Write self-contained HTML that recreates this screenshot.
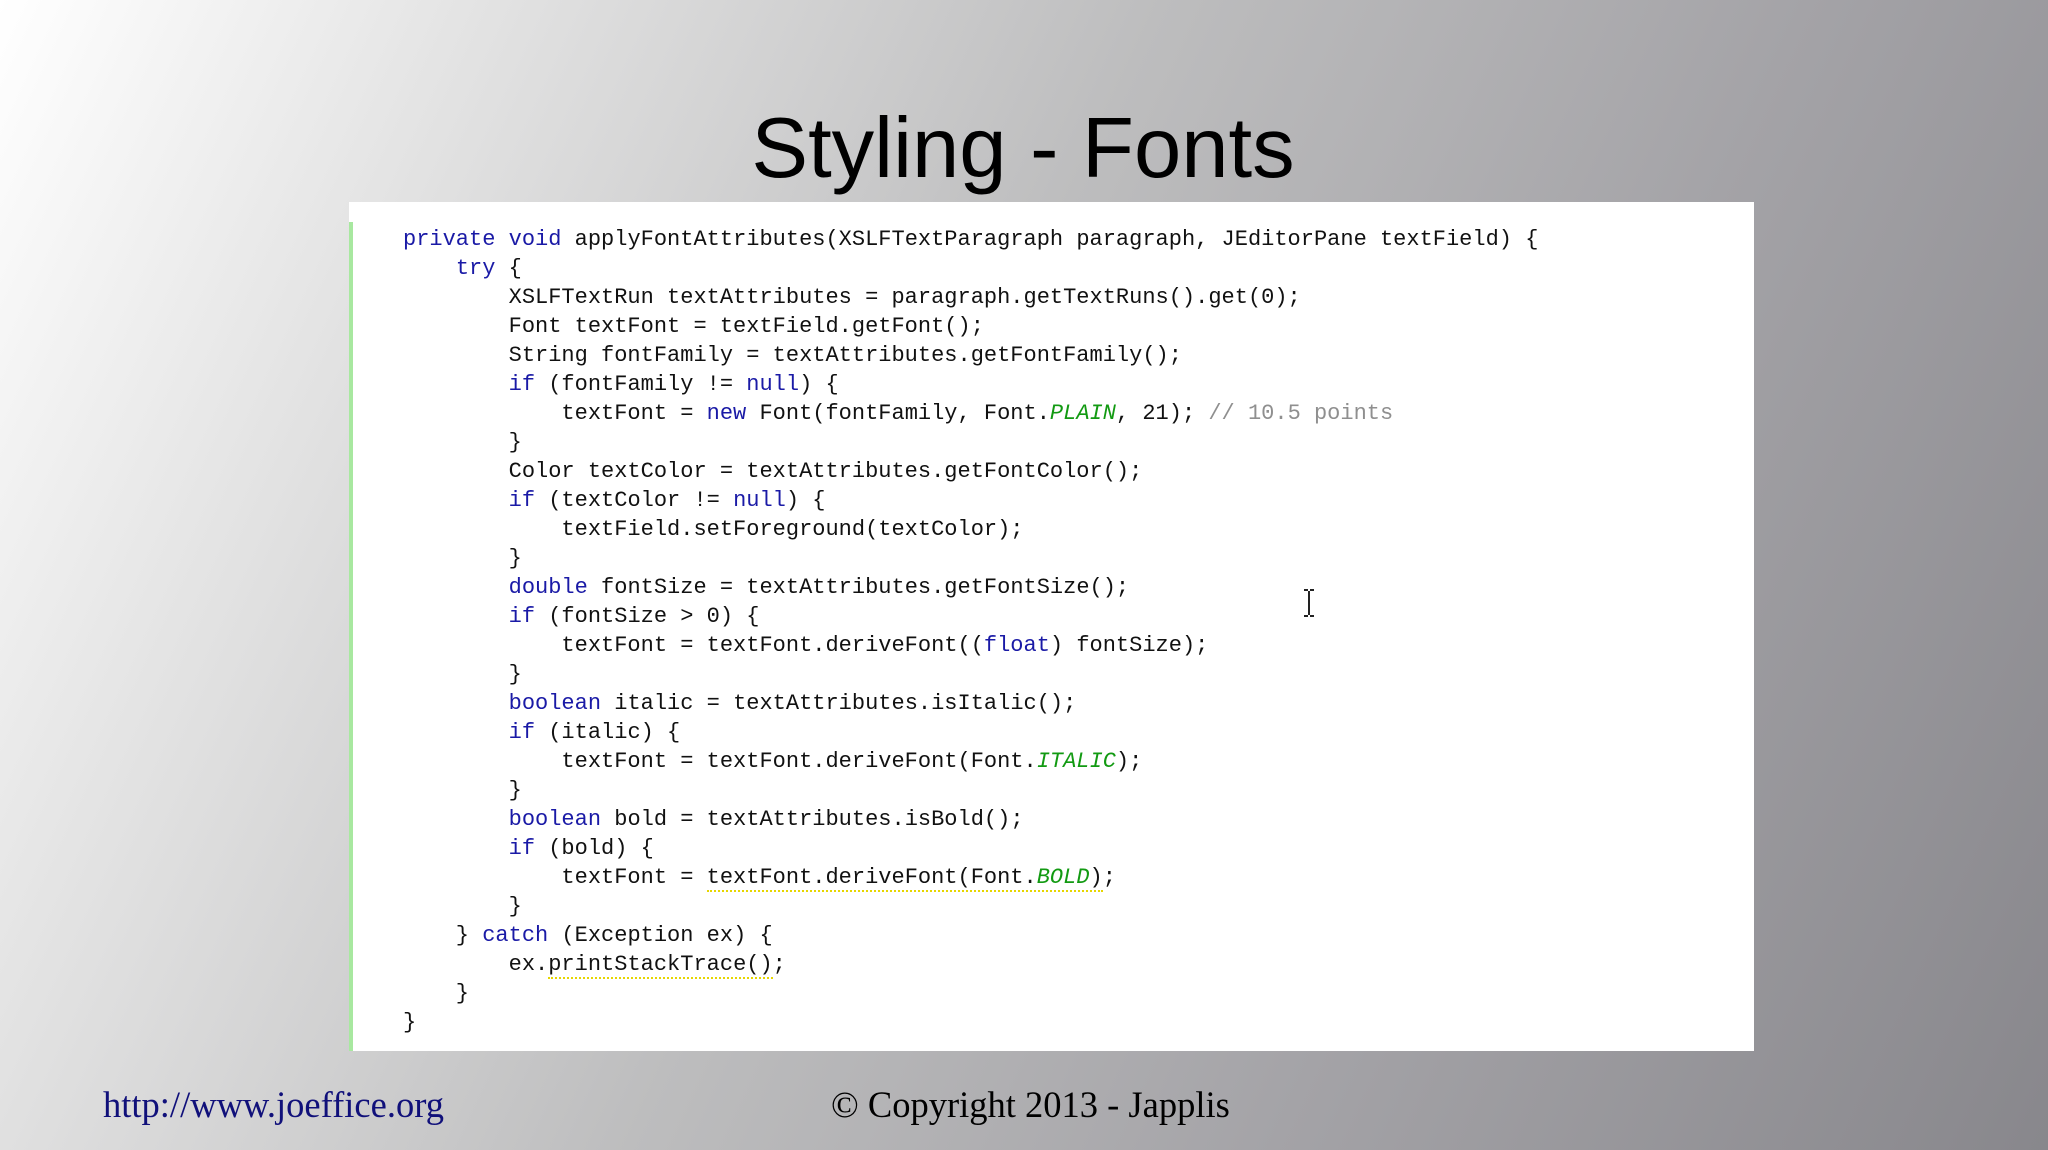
<!DOCTYPE html>
<html><head><meta charset="utf-8"><style>
html,body{margin:0;padding:0}
body{width:2048px;height:1150px;overflow:hidden;position:relative;
background:linear-gradient(115deg,#ffffff 0%,#e4e4e4 18%,#bdbdbe 45%,#a4a3a7 70%,#88878c 100%);}
.title{position:absolute;left:0;width:2046px;top:100px;text-align:center;font:85px "Liberation Sans",sans-serif;color:#000;}
.box{position:absolute;left:349px;top:202px;width:1405px;height:849px;background:#fff;}
.bar{position:absolute;left:349px;top:222px;width:4px;height:829px;background:#a8e8a0;}
pre{position:absolute;left:403px;top:225px;margin:0;font:22px/29px "Liberation Mono",monospace;color:#111;}
.k{color:#1a1aa6}.c{color:#8f8f8f}.g{color:#129a12;font-style:italic}
.u{border-bottom:2px dotted #e6d600}
.f1{position:absolute;left:103px;top:1083px;font:36.5px "Liberation Serif",serif;color:#10107a;}
.f2{position:absolute;left:831px;top:1083px;font:36.5px "Liberation Serif",serif;color:#000;}
</style></head><body>
<div class="title">Styling - Fonts</div>
<div class="box"></div><div class="bar"></div>
<svg style="position:absolute;left:1302px;top:588px" width="14" height="30" viewBox="0 0 14 30"><path d="M2 2h4M8 2h4M7 3v24M2 28h4M8 28h4" stroke="#222" stroke-width="2" fill="none"/></svg>
<pre><span class="k">private</span> <span class="k">void</span> applyFontAttributes(XSLFTextParagraph paragraph, JEditorPane textField) {
    <span class="k">try</span> {
        XSLFTextRun textAttributes = paragraph.getTextRuns().get(0);
        Font textFont = textField.getFont();
        String fontFamily = textAttributes.getFontFamily();
        <span class="k">if</span> (fontFamily != <span class="k">null</span>) {
            textFont = <span class="k">new</span> Font(fontFamily, Font.<span class="g">PLAIN</span>, 21); <span class="c">// 10.5 points</span>
        }
        Color textColor = textAttributes.getFontColor();
        <span class="k">if</span> (textColor != <span class="k">null</span>) {
            textField.setForeground(textColor);
        }
        <span class="k">double</span> fontSize = textAttributes.getFontSize();
        <span class="k">if</span> (fontSize &gt; 0) {
            textFont = textFont.deriveFont((<span class="k">float</span>) fontSize);
        }
        <span class="k">boolean</span> italic = textAttributes.isItalic();
        <span class="k">if</span> (italic) {
            textFont = textFont.deriveFont(Font.<span class="g">ITALIC</span>);
        }
        <span class="k">boolean</span> bold = textAttributes.isBold();
        <span class="k">if</span> (bold) {
            textFont = <span class="u">textFont.deriveFont(Font.<span class="g">BOLD</span>)</span>;
        }
    } <span class="k">catch</span> (Exception ex) {
        ex.<span class="u">printStackTrace()</span>;
    }
}</pre>
<div class="f1">http://www.joeffice.org</div>
<div class="f2">© Copyright 2013 - Japplis</div>
</body></html>
